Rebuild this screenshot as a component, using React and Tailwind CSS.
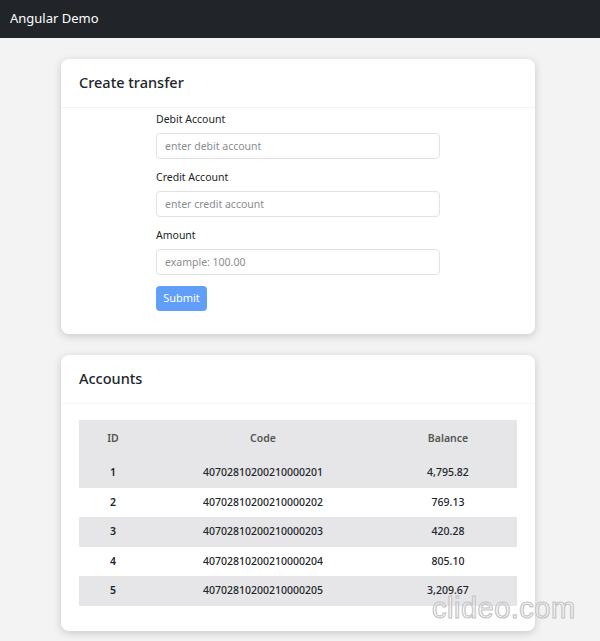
const accounts = [
  { id: 1, code: '40702810200210000201', balance: '4,795.82' },
  { id: 2, code: '40702810200210000202', balance: '769.13' },
  { id: 3, code: '40702810200210000203', balance: '420.28' },
  { id: 4, code: '40702810200210000204', balance: '805.10' },
  { id: 5, code: '40702810200210000205', balance: '3,209.67' },
];

function Field({ label, placeholder }) {
  return (
    <div className="flex flex-col">
      <label className="text-[10.5px] text-[#212529] leading-[14px] mb-[7px]">{label}</label>
      <input
        placeholder={placeholder}
        className="h-[26px] w-full rounded-[4px] border border-[#e2e2e2] bg-white px-2 text-[10.5px] text-[#212529] placeholder:text-[#8a8d91] outline-none"
      />
    </div>
  );
}

export default function App() {
  return (
    <div className="relative min-h-[641px] bg-[#f3f3f4] font-['Noto_Sans',sans-serif] overflow-hidden">
      {/* Navbar */}
      <div className="h-[38px] bg-[#212529] flex items-center px-[10px]">
        <span className="text-white text-[13px]">Angular Demo</span>
      </div>

      <div className="w-[474px] ml-[61px] pt-[21px] flex flex-col gap-[21px]">
        {/* Create transfer */}
        <div className="bg-white rounded-[8px] shadow-[0_2px_8px_rgba(0,0,0,0.18)]">
          <div className="h-[49px] px-[18px] flex items-center border-b border-[#f2f2f2]">
            <h2 className="text-[14.5px] font-medium text-[#212529]">Create transfer</h2>
          </div>
          <div className="pl-[95px] pr-[95px] pt-[4px] pb-[23px]">
            <div className="flex flex-col gap-[11px]">
              <Field label="Debit Account" placeholder="enter debit account" />
              <Field label="Credit Account" placeholder="enter credit account" />
              <Field label="Amount" placeholder="example: 100.00" />
            </div>
            <button className="mt-[11px] h-[25px] w-[51px] rounded-[4px] bg-[#5f9ffa] text-white text-[11px]">
              Submit
            </button>
          </div>
        </div>

        {/* Accounts */}
        <div className="bg-white rounded-[8px] shadow-[0_2px_8px_rgba(0,0,0,0.18)]">
          <div className="h-[49px] px-[18px] flex items-center border-b border-[#f7f7f7]">
            <h2 className="text-[14.5px] font-medium text-[#212529]">Accounts</h2>
          </div>
          <div className="px-[18px] pt-[16px] pb-[25px]">
            <table className="w-full border-collapse text-[10.5px]">
              <colgroup>
                <col className="w-[68px]" />
                <col className="w-[232px]" />
                <col className="w-[138px]" />
              </colgroup>
              <thead>
                <tr className="bg-[#e6e6e8] h-[38px] text-[#555]">
                  <th className="font-semibold">ID</th>
                  <th className="font-semibold">Code</th>
                  <th className="font-semibold">Balance</th>
                </tr>
              </thead>
              <tbody>
                {accounts.map((a, i) => (
                  <tr key={a.id} className={`h-[29.6px] text-[#212529] font-medium text-center ${i % 2 === 0 ? 'bg-[#e6e6e8]' : 'bg-white'}`}>
                    <td className="font-semibold">{a.id}</td>
                    <td>{a.code}</td>
                    <td>{a.balance}</td>
                  </tr>
                ))}
              </tbody>
            </table>
          </div>
        </div>
      </div>

      {/* Watermark */}
      <div className="absolute left-[432px] top-[594px] text-[29px] leading-none tracking-[0.5px] text-white/60 [-webkit-text-stroke:1.2px_#c4c4c4] font-['Liberation_Sans',sans-serif] pointer-events-none">
        clideo.com
      </div>
    </div>
  );
}
